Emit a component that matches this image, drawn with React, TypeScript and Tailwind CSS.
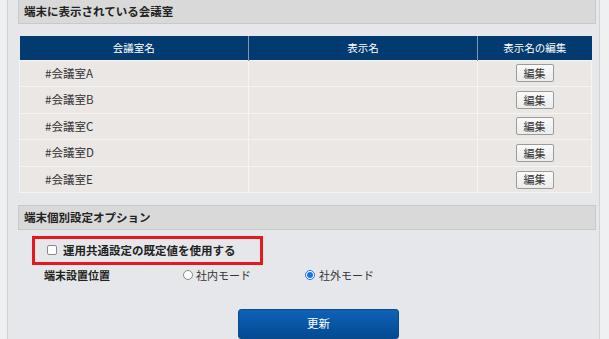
import React from "react";

const rooms = ["#会議室A", "#会議室B", "#会議室C", "#会議室D", "#会議室E"];

function SectionHeading({ children }: { children: React.ReactNode }) {
  return (
    <div className="flex h-[25px] items-center border border-[#c9c9c9] bg-[#d9d9d9] pl-[5px] text-[11.5px] font-bold text-[#222]">
      {children}
    </div>
  );
}

export default function App() {
  return (
    <div
      className="h-[339px] w-[609px] overflow-hidden bg-[#eef0f2]"
      style={{ fontFamily: '"Noto Sans CJK JP", "Noto Sans", sans-serif' }}
    >
      <div className="ml-[7px] flex h-full w-[593px] flex-col border-x border-[#d0d3d8] bg-[#e6e7eb] pl-[10px] pr-[3px]">
        <div className="-mt-[1px]">
          <SectionHeading>端末に表示されている会議室</SectionHeading>
        </div>

        <table className="mt-[12px] ml-[1px] w-[573px] border-collapse text-[11.5px] text-[#333]">
          <thead>
            <tr className="h-[24px] bg-[#033a6f] text-[10.5px] font-normal text-white">
              <th className="w-[229px] border-r border-[#7f99b5] font-normal">会議室名</th>
              <th className="w-[229px] border-r border-[#7f99b5] font-normal">表示名</th>
              <th className="font-normal">表示名の編集</th>
            </tr>
          </thead>
          <tbody>
            {rooms.map((r) => (
              <tr key={r} className="h-[26.6px] border-t border-[#f6f4f3] bg-[#ebe7e5]">
                <td className="border-r border-l border-[#f6f4f3] pl-[25px]">{r}</td>
                <td className="border-r border-[#f6f4f3]"></td>
                <td className="border-r border-[#f6f4f3] text-center">
                  <button className="inline-flex h-[18px] w-[38px] items-center justify-center rounded-[2px] border border-[#9b9b9b] bg-gradient-to-b from-[#fafafa] to-[#ececec] text-[11px] text-[#333]">
                    編集
                  </button>
                </td>
              </tr>
            ))}
            <tr className="h-0 border-t border-[#f6f4f3]"><td colSpan={3}></td></tr>
          </tbody>
        </table>

        <div className="mt-[12px]">
          <SectionHeading>端末個別設定オプション</SectionHeading>
        </div>

        <div className="mt-[6px] ml-[14px] flex h-[32px] w-[231px] items-center border-[3px] border-[#e5171f] pl-[12px]">
          <span className="h-[10px] w-[10px] rounded-[2px] border border-[#8a8a8a] bg-white" />
          <span className="ml-[6px] text-[11.5px] font-bold text-[#222]">運用共通設定の既定値を使用する</span>
        </div>

        <div className="mt-[2px] flex h-[18px] items-center text-[11px] text-[#333]">
          <span className="ml-[26px] w-[139px] font-bold text-[#222]">端末設置位置</span>
          <label className="flex items-center">
            <span className="h-[10px] w-[10px] rounded-full border border-[#8a8a8a] bg-white" />
            <span className="ml-[3px]">社内モード</span>
          </label>
          <label className="ml-[54px] flex items-center">
            <span className="flex h-[10px] w-[10px] items-center justify-center rounded-full border border-[#1a73e8] bg-white">
              <span className="h-[6px] w-[6px] rounded-full bg-[#1a73e8]" />
            </span>
            <span className="ml-[4px]">社外モード</span>
          </label>
        </div>

        <div className="mt-[26px] flex">
          <button className="ml-[220px] flex h-[30px] w-[161px] items-center justify-center rounded-[3px] border border-[#0b4a8e] bg-gradient-to-b from-[#0f62b8] to-[#034a92] text-[11.5px] text-white">
            更新
          </button>
        </div>
      </div>
    </div>
  );
}
